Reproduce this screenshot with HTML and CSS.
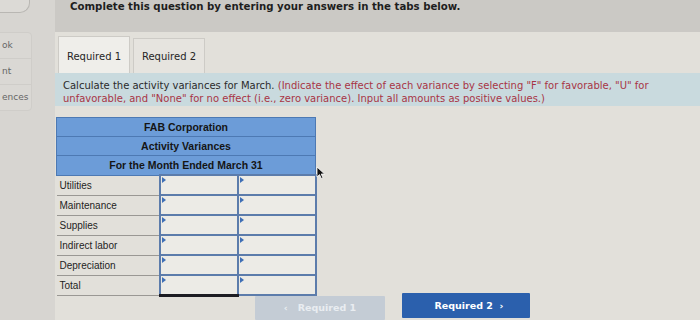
FILE: index.html
```html
<!DOCTYPE html>
<html>
<head>
    <title>Activity Variances</title>
    <link rel="stylesheet" href="styles.css">
</head>
<body>
    <div class="page">
        <aside class="side">
            <div class="side-btn"></div>
            <ul class="side-list">
                <li>ok</li>
                <li>nt</li>
                <li>ences</li>
            </ul>
        </aside>

        <main class="main">
            <div class="banner">Complete this question by entering your answers in the tabs below.</div>

            <div class="tabs">
                <div class="tab active">Required 1</div>
                <div class="tab">Required 2</div>
            </div>

            <div class="prompt">
                Calculate the activity variances for March. <span class="hint">(Indicate the effect of each variance by selecting "F" for favorable, "U" for unfavorable, and "None" for no effect (i.e., zero variance). Input all amounts as positive values.)</span>
            </div>

            <table class="sheet">
                <tr class="head"><th colspan="3">FAB Corporation</th></tr>
                <tr class="head"><th colspan="3">Activity Variances</th></tr>
                <tr class="head"><th colspan="3">For the Month Ended March 31</th></tr>
                <tr><td class="label">Utilities</td><td class="cell"></td><td class="cell"></td></tr>
                <tr><td class="label">Maintenance</td><td class="cell"></td><td class="cell"></td></tr>
                <tr><td class="label">Supplies</td><td class="cell"></td><td class="cell"></td></tr>
                <tr><td class="label">Indirect labor</td><td class="cell"></td><td class="cell"></td></tr>
                <tr><td class="label">Depreciation</td><td class="cell"></td><td class="cell"></td></tr>
                <tr class="total"><td class="label">Total</td><td class="cell"></td><td class="cell"></td></tr>
            </table>

            <div class="nav">
                <button class="nav-btn prev">&lsaquo;&nbsp;&nbsp;&nbsp;Required 1</button>
                <button class="nav-btn next">Required 2&nbsp;&nbsp;&rsaquo;</button>
            </div>

            <svg class="cursor" width="10" height="14" viewBox="0 0 10 14">
                <path d="M1 1 L1 11 L3.5 8.6 L5.4 12.6 L7 11.9 L5.2 8 L8.6 8 Z" fill="#111" stroke="#fff" stroke-width="0.8"/>
            </svg>
        </main>
    </div>
</body>
</html>
```

FILE: styles.css
```css
html, body {
    margin: 0;
    padding: 0;
}
body {
    width: 700px;
    height: 320px;
    overflow: hidden;
    background: #d7d5d1;
    font-family: 'DejaVu Sans', Verdana, sans-serif;
    color: #222;
}
.page {
    display: grid;
    grid-template-columns: 55px 1fr;
    height: 320px;
}
.side {
    overflow: hidden;
}
.side-btn {
    width: 38px;
    height: 12px;
    margin-left: -10px;
    border: 1px solid #b9b7b3;
    border-top: none;
    border-radius: 0 0 10px 0;
    background: #dcdad6;
}
.side-list {
    list-style: none;
    margin: 19px 0 0 -10px;
    padding: 0;
    width: 40px;
    border: 1px solid #cfcdc9;
    border-radius: 0 4px 4px 0;
    background: #dad8d4;
}
.side-list li {
    height: 25px;
    line-height: 25px;
    padding-left: 11px;
    font-size: 9px;
    color: #666;
    border-bottom: 1px solid #cfcdc9;
}
.side-list li:last-child {
    border-bottom: none;
}
.main {
    position: relative;
    background: #e2e0da;
}
.banner {
    height: 32px;
    background: #cbc9c5;
    padding-left: 15px;
    font-size: 10.2px;
    font-weight: bold;
    line-height: 14px;
    color: #1e1e1e;
    white-space: nowrap;
}
.tabs {
    display: flex;
    align-items: flex-end;
    gap: 3px;
    height: 41px;
    padding-left: 3px;
}
.tab {
    width: 72px;
    height: 35px;
    box-sizing: border-box;
    border: 1px solid #cdcbc6;
    border-bottom: none;
    background: #e6e4df;
    font-size: 10px;
    text-align: center;
    line-height: 35px;
    color: #252525;
}
.tab.active {
    height: 37px;
    line-height: 39px;
    background: #efeeea;
}
.prompt {
    height: 33px;
    box-sizing: border-box;
    padding: 7px 8px 0 8px;
    background: #c9dade;
    font-size: 10px;
    line-height: 12.5px;
    color: #2b2b2b;
}
.hint {
    color: #a83545;
}
.sheet {
    margin: 11px 0 0 1px;
    border-collapse: collapse;
    font-family: 'Liberation Sans', Arial, sans-serif;
    font-size: 10px;
}
.sheet .head th {
    height: 18px;
    padding: 0;
    background: #6c9cd8;
    border: 1px solid #4d79b3;
    font-weight: bold;
    font-size: 10.5px;
    color: #151515;
    text-align: center;
}
.label {
    width: 99px;
    height: 18px;
    padding: 1px 0 0 3px;
    border-bottom: 1px solid #9a9894;
    color: #1e1e1e;
}
.cell {
    position: relative;
    width: 76px;
    padding: 0;
    background: #ecebe6;
    border: 2px solid #5c7cab;
}
.cell::before {
    content: "";
    position: absolute;
    top: 1px;
    left: 1px;
    border-top: 3px solid transparent;
    border-bottom: 3px solid transparent;
    border-left: 4px solid #3f6fb5;
}
.total .cell:nth-child(2) {
    border-bottom: 3px solid #1c1c22;
}
.nav {
    display: flex;
    align-items: flex-end;
    gap: 17px;
    margin: -4px 0 0 200px;
}
.nav-btn {
    width: 130px;
    height: 25px;
    border: none;
    border-radius: 1px;
    font-family: 'DejaVu Sans', Verdana, sans-serif;
    font-size: 9.5px;
    font-weight: bold;
    padding: 0;
}
.prev {
    height: 24px;
    background: #c4ccd5;
    color: #e9edf1;
}
.next {
    width: 128px;
    margin-bottom: 2px;
    padding-left: 6px;
    background: #2b60ad;
    color: #fff;
}
.cursor {
    position: absolute;
    left: 261px;
    top: 166px;
}
```
